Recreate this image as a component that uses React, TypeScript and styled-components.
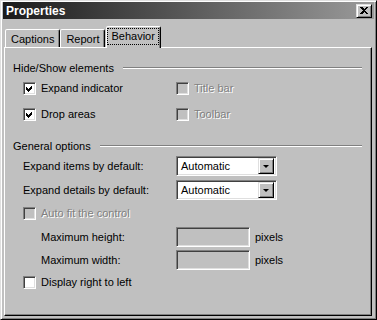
import styled, { createGlobalStyle } from 'styled-components';

const Global = createGlobalStyle`
  body {
    margin: 0;
    background: #c0c0c0;
  }
`;

const Window = styled.div`
  box-sizing: border-box;
  width: 377px;
  height: 320px;
  background: #c0c0c0;
  border: 1px solid;
  border-color: #dfdfdf #000 #000 #dfdfdf;
  box-shadow: inset 1px 1px #fff, inset -1px -1px #808080;
  padding: 1px 2px 2px 2px;
  display: flex;
  flex-direction: column;
  font-family: "Liberation Sans", Arial, sans-serif;
  font-size: 11px;
  color: #000;
`;

const TitleBar = styled.div`
  height: 17px;
  flex-shrink: 0;
  display: flex;
  align-items: center;
  justify-content: space-between;
  padding: 0 2px 0 3px;
  background: linear-gradient(to right, #1a1a1a, #9a9a9a);
  color: #fff;
  font-weight: bold;
  font-size: 12px;
`;

const CloseButton = styled.div`
  box-sizing: border-box;
  width: 16px;
  height: 14px;
  background: #c0c0c0;
  border: 1px solid;
  border-color: #dfdfdf #000 #000 #dfdfdf;
  box-shadow: inset 1px 1px #fff, inset -1px -1px #808080;
  display: flex;
  align-items: center;
  justify-content: center;
`;

const TabStrip = styled.div`
  display: flex;
  align-items: flex-start;
  height: 21px;
  margin: 7px 0 0 2px;
  flex-shrink: 0;
`;

const Tab = styled.div<{ $active?: boolean }>`
  box-sizing: border-box;
  position: relative;
  z-index: ${p => (p.$active ? 1 : 0)};
  height: ${p => (p.$active ? 22 : 18)}px;
  margin-top: ${p => (p.$active ? 0 : 3)}px;
  margin-left: ${p => (p.$active ? 1 : 0)}px;
  padding: ${p => (p.$active ? '2px 2px 0 1px' : '0 5px')};
  background: #c0c0c0;
  border: 1px solid;
  border-bottom: none;
  border-color: #fff #000 transparent #fff;
  border-radius: 2px 2px 0 0;
  box-shadow: inset -1px 0 #808080;
  display: flex;
  align-items: ${p => (p.$active ? 'flex-start' : 'center')};
  white-space: nowrap;
`;

const FocusLabel = styled.span`
  outline: 1px dotted #000;
  outline-offset: 0;
  padding: 1px 3px 2px 3px;
`;

const Panel = styled.div`
  flex: 1;
  margin: 0 2px 1px 1px;
  border: 1px solid;
  border-color: #fff #000 #000 #fff;
  box-shadow: inset -1px -1px #808080;
  padding: 13px 9px 0 8px;
  display: flex;
  flex-direction: column;
`;

const GroupHeader = styled.div<{ $gap: number }>`
  height: 14px;
  margin-top: ${p => p.$gap}px;
  display: flex;
  align-items: center;
  white-space: nowrap;
`;

const Etch = styled.div`
  flex: 1;
  margin-left: 9px;
  border-top: 1px solid #808080;
  border-bottom: 1px solid #fff;
`;

const Row = styled.div<{ $gap: number }>`
  height: 20px;
  margin-top: ${p => p.$gap}px;
  display: grid;
  grid-template-columns: 153px 1fr;
  align-items: center;
  padding-left: 10px;
`;

const Field = styled.div<{ $indent?: boolean }>`
  display: flex;
  align-items: center;
  gap: 5px;
  padding-left: ${p => (p.$indent ? 18 : 0)}px;
  white-space: nowrap;
`;

const Label = styled.span<{ $disabled?: boolean }>`
  color: ${p => (p.$disabled ? '#808080' : '#000')};
  text-shadow: ${p => (p.$disabled ? '1px 1px 0 #fff' : 'none')};
`;

const Box = styled.span<{ $disabled?: boolean }>`
  box-sizing: border-box;
  width: 13px;
  height: 13px;
  flex-shrink: 0;
  background: ${p => (p.$disabled ? '#c0c0c0' : '#fff')};
  border: 1px solid;
  border-color: #808080 #fff #fff #808080;
  box-shadow: inset 1px 1px #404040, inset -1px -1px #dfdfdf;
  display: flex;
  align-items: center;
  justify-content: center;
`;

const Combo = styled.div`
  box-sizing: border-box;
  width: 101px;
  height: 20px;
  background: #fff;
  border: 1px solid;
  border-color: #808080 #fff #fff #808080;
  box-shadow: inset 1px 1px #404040, inset -1px -1px #dfdfdf;
  display: flex;
  align-items: center;
  justify-content: space-between;
  padding: 0 2px 0 4px;
`;

const DropButton = styled.div`
  box-sizing: border-box;
  width: 16px;
  height: 16px;
  background: #c0c0c0;
  border: 1px solid;
  border-color: #dfdfdf #000 #000 #dfdfdf;
  box-shadow: inset 1px 1px #fff, inset -1px -1px #808080;
  display: flex;
  align-items: center;
  justify-content: center;

  &::after {
    content: '';
    border-left: 3px solid transparent;
    border-right: 3px solid transparent;
    border-top: 3px solid #000;
  }
`;

const TextBox = styled.div`
  box-sizing: border-box;
  width: 74px;
  height: 20px;
  background: #c0c0c0;
  border: 1px solid;
  border-color: #808080 #fff #fff #808080;
  box-shadow: inset 1px 1px #404040, inset -1px -1px #dfdfdf;
`;

const Check = () => (
  <svg width="7" height="7" viewBox="0 0 7 7" shapeRendering="crispEdges">
    <path d="M0 2 L2 4 L6 0 L6 3 L2 7 L0 5 Z" fill="#000" />
  </svg>
);

const CloseGlyph = () => (
  <svg width="8" height="7" viewBox="0 0 8 7" shapeRendering="crispEdges">
    <path d="M0 0 H2 L4 2 L6 0 H8 L5 3.5 L8 7 H6 L4 5 L2 7 H0 L3 3.5 Z" fill="#000" />
  </svg>
);

function CheckField({ label, checked, disabled }: { label: string; checked?: boolean; disabled?: boolean }) {
  return (
    <Field>
      <Box $disabled={disabled}>{checked && <Check />}</Box>
      <Label $disabled={disabled}>{label}</Label>
    </Field>
  );
}

export default function App() {
  return (
    <>
      <Global />
      <Window>
        <TitleBar>
          <span>Properties</span>
          <CloseButton>
            <CloseGlyph />
          </CloseButton>
        </TitleBar>

        <TabStrip>
          <Tab>Captions</Tab>
          <Tab>Report</Tab>
          <Tab $active>
            <FocusLabel>Behavior</FocusLabel>
          </Tab>
        </TabStrip>

        <Panel>
          <GroupHeader $gap={0}>
            Hide/Show elements
            <Etch />
          </GroupHeader>
          <Row $gap={3}>
            <CheckField label="Expand indicator" checked />
            <CheckField label="Title bar" disabled />
          </Row>
          <Row $gap={6}>
            <CheckField label="Drop areas" checked />
            <CheckField label="Toolbar" disabled />
          </Row>

          <GroupHeader $gap={15}>
            General options
            <Etch />
          </GroupHeader>
          <Row $gap={3}>
            <Field>Expand items by default:</Field>
            <Combo>
              Automatic
              <DropButton />
            </Combo>
          </Row>
          <Row $gap={4}>
            <Field>Expand details by default:</Field>
            <Combo>
              Automatic
              <DropButton />
            </Combo>
          </Row>
          <Row $gap={3}>
            <CheckField label="Auto fit the control" disabled />
          </Row>
          <Row $gap={4}>
            <Field $indent>Maximum height:</Field>
            <Field>
              <TextBox />
              pixels
            </Field>
          </Row>
          <Row $gap={3}>
            <Field $indent>Maximum width:</Field>
            <Field>
              <TextBox />
              pixels
            </Field>
          </Row>
          <Row $gap={2}>
            <CheckField label="Display right to left" />
          </Row>
        </Panel>
      </Window>
    </>
  );
}
